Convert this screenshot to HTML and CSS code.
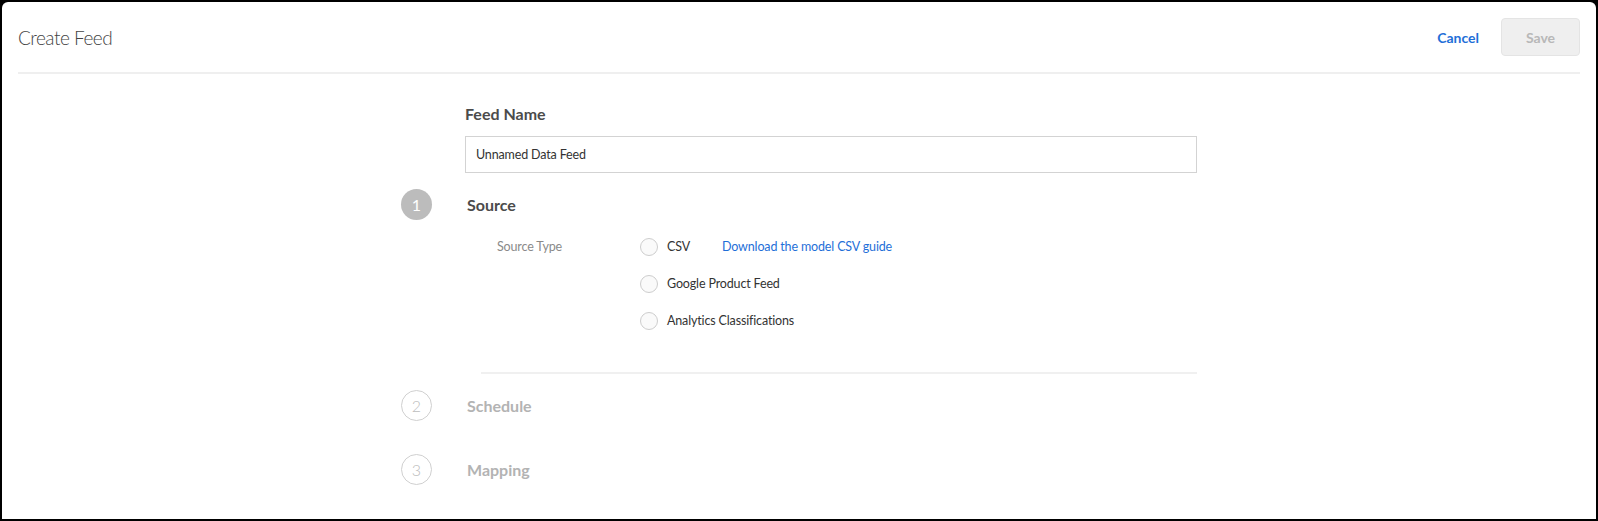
FILE: index.html
```html
<!DOCTYPE html>
<html lang="en">
<head>
<meta charset="utf-8">
<title>Create Feed</title>
<link rel="stylesheet" href="styles.css">
</head>
<body>
<div class="window">
  <header class="topbar">
    <h1 class="title">Create Feed</h1>
    <div class="actions">
      <a class="cancel" href="#">Cancel</a>
      <button class="save" type="button" disabled>Save</button>
    </div>
  </header>

  <main class="form">
    <section class="feed-name">
      <label class="field-title" for="feedName">Feed Name</label>
      <input id="feedName" class="text-input" type="text" value="Unnamed Data Feed">
    </section>

    <section class="step step-active">
      <div class="step-head">
        <span class="step-num">1</span>
        <h2 class="step-title">Source</h2>
      </div>
      <div class="field-row">
        <span class="field-label">Source Type</span>
        <div class="radio-list">
          <div class="radio-row">
            <span class="radio"></span>
            <span class="radio-label">CSV</span>
            <a class="guide-link" href="#">Download the model CSV guide</a>
          </div>
          <div class="radio-row">
            <span class="radio"></span>
            <span class="radio-label">Google Product Feed</span>
          </div>
          <div class="radio-row">
            <span class="radio"></span>
            <span class="radio-label">Analytics Classifications</span>
          </div>
        </div>
      </div>
    </section>

    <hr class="divider">

    <section class="step step-pending">
      <div class="step-head">
        <span class="step-num">2</span>
        <h2 class="step-title">Schedule</h2>
      </div>
    </section>

    <section class="step step-pending">
      <div class="step-head">
        <span class="step-num">3</span>
        <h2 class="step-title">Mapping</h2>
      </div>
    </section>
  </main>
</div>
</body>
</html>
```

FILE: styles.css
```css
* { box-sizing: border-box; }

html, body {
  margin: 0;
  height: 100%;
}

body {
  background: #000;
  padding: 2px;
  font-family: "Lato", "Open Sans", sans-serif;
  color: #4b4b4b;
  overflow: hidden;
}

.window {
  background: #fff;
  height: 100%;
  border-radius: 6px 6px 0 0;
  overflow: hidden;
}

/* Top bar */
.topbar {
  height: 72px;
  margin: 0 16px;
  border-bottom: 2px solid #efefef;
  display: flex;
  align-items: center;
  justify-content: space-between;
}

.title {
  margin: 0;
  font-size: 19px;
  font-weight: 300;
  letter-spacing: -0.5px;
  color: #444;
}

.actions {
  display: flex;
  align-items: center;
  gap: 22px;
}

.cancel {
  color: #1f6fd8;
  font-size: 14px;
  font-weight: 700;
  text-decoration: none;
}

.save {
  width: 79px;
  height: 38px;
  background: #efefef;
  border: 1px solid #e4e4e4;
  border-radius: 4px;
  color: #b8b8b8;
  font-family: inherit;
  font-size: 14px;
  font-weight: 700;
}

/* Form */
.form {
  width: 796px;
  margin: 0 auto;
  padding-top: 30px;
}

.feed-name {
  padding-left: 64px;
  display: flex;
  flex-direction: column;
}

.field-title {
  font-size: 16px;
  line-height: 20px;
  font-weight: 700;
  color: #4b4b4b;
}

.text-input {
  margin-top: 12px;
  height: 37px;
  border: 1px solid #d3d3d3;
  border-radius: 0;
  padding: 0 10px;
  font-family: inherit;
  font-size: 12.5px;
  letter-spacing: -0.15px;
  color: #333;
  outline: none;
}

.step-head {
  display: flex;
  align-items: center;
}

.step-num {
  width: 31px;
  height: 31px;
  border-radius: 50%;
  display: flex;
  align-items: center;
  justify-content: center;
  font-size: 16px;
  margin-right: 35px;
  flex: none;
}

.step-title {
  margin: 0;
  font-size: 16px;
  line-height: 20px;
  font-weight: 700;
}

.step-active {
  margin-top: 16px;
}

.step-active .step-num {
  background: #bcbcbc;
  color: #fff;
}

.step-active .step-title {
  color: #4b4b4b;
}

.step-pending {
  margin-bottom: 33px;
}

.step-pending .step-num {
  border: 1px solid #d0d0d0;
  color: #bdbdbd;
  font-weight: 300;
}

.step-pending .step-title {
  color: #b3b3b3;
}

/* Source type */
.field-row {
  display: flex;
  margin-top: 8px;
  padding-left: 96px;
}

.field-label {
  width: 143px;
  height: 37px;
  display: flex;
  align-items: center;
  font-size: 12.5px;
  letter-spacing: -0.15px;
  color: #8a8a8a;
}

.radio-list {
  display: flex;
  flex-direction: column;
}

.radio-row {
  height: 37px;
  display: flex;
  align-items: center;
}

.radio {
  width: 18px;
  height: 18px;
  border-radius: 50%;
  border: 1px solid #cdcdcd;
  background: #fafafa;
  margin-right: 9px;
  flex: none;
}

.radio-label {
  font-size: 12.5px;
  letter-spacing: -0.15px;
  color: #333;
}

.guide-link {
  margin-left: 32px;
  font-size: 12.5px;
  letter-spacing: -0.15px;
  color: #1f6fd8;
  text-decoration: none;
}

.divider {
  margin: 33px 0 16px 80px;
  border: 0;
  border-top: 2px solid #f0f0f0;
}
```
